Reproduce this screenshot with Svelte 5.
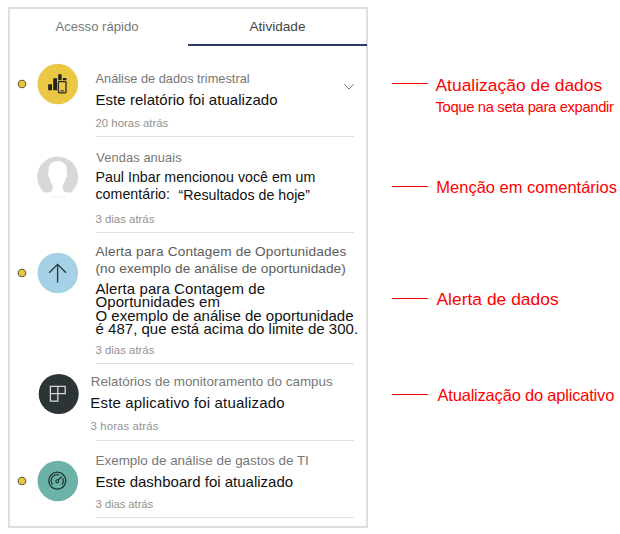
<script>
  const items = [
    {
      height: 91, pad: 25, icon: 'report', iconTop: 16.5, unread: true, expand: true,
      lines: [
        { kind: 'title small', text: 'Análise de dados trimestral', ls: -0.01 },
        { kind: 'message', text: 'Este relatório foi atualizado', ls: 0.04, gap: 7 },
        { kind: 'time', text: '20 horas atrás', ls: 0, gap: 10 }
      ]
    },
    {
      height: 96, pad: 13, icon: 'person', iconTop: 19,
      lines: [
        { kind: 'title small', text: 'Vendas anuais', ls: 0.12, indent: 0.8 },
        { kind: 'message compact', text: 'Paul Inbar mencionou você em um', ls: 0.02, gap: 5 },
        { kind: 'message compact', text: 'comentário:', quote: '“Resultados de hoje”', ls: 0.03, gap: 3 },
        { kind: 'time', text: '3 dias atrás', ls: 0, gap: 11 }
      ]
    },
    {
      height: 131, pad: 10, icon: 'alert', iconTop: 19, unread: true,
      lines: [
        { kind: 'title dark', text: 'Alerta para Contagem de Oportunidades', ls: 0.14 },
        { kind: 'title dark', text: '(no exemplo de análise de oportunidade)', ls: 0.06 },
        { kind: 'message', text: 'Alerta para Contagem de', ls: 0.09, gap: 5 },
        { kind: 'message', text: 'Oportunidades em', ls: 0.07 },
        { kind: 'message', text: 'O exemplo de análise de oportunidade', ls: 0.01, gap: 1 },
        { kind: 'message', text: 'é 487, que está acima do limite de 300.', ls: 0.02 },
        { kind: 'time', text: '3 dias atrás', ls: 0, gap: 8 }
      ]
    },
    {
      height: 77, pad: 9, icon: 'app', iconTop: 9,
      lines: [
        { kind: 'title', text: 'Relatórios de monitoramento do campus', ls: 0.02, indent: -4.7 },
        { kind: 'message', text: 'Este aplicativo foi atualizado', ls: 0.17, gap: 6, indent: -5.2 },
        { kind: 'time', text: '3 horas atrás', ls: 0.12, gap: 10, indent: -5 }
      ]
    },
    {
      height: 77, pad: 11, icon: 'gauge', iconTop: 19.3, unread: true,
      lines: [
        { kind: 'title', text: 'Exemplo de análise de gastos de TI', ls: 0.02 },
        { kind: 'message', text: 'Este dashboard foi atualizado', ls: 0, gap: 6 },
        { kind: 'time', text: '3 dias atrás', ls: -0.1, gap: 9 }
      ]
    }
  ];

  const notes = [
    { height: 102, rule: 7, indent: 0, size: 17.4, ls: 0.02, text: 'Atualização de dados', sub: 'Toque na seta para expandir' },
    { height: 112, rule: 8, indent: 0.8, size: 16.5, ls: 0, text: 'Menção em comentários' },
    { height: 96, rule: 8, indent: 1, size: 17.4, ls: 0.02, text: 'Alerta de dados' },
    { height: 30, rule: 8, indent: 2, size: 16.5, ls: -0.2, text: 'Atualização do aplicativo' }
  ];
</script>

<div class="page">
  <section class="card">
    <nav class="tabs">
      <div class="tab first">Acesso rápido</div>
      <div class="tab active">Atividade</div>
    </nav>
    {#each items as item}
      <article class="item" style:height="{item.height}px">
        <div class="status" style:padding-top="{item.iconTop + 16}px">
          {#if item.unread}
            <svg width="10" height="10" viewBox="0 0 10 10"><circle cx="5" cy="5" r="3.8" fill="#e9c53f" stroke="#65603f" stroke-width="1.1" /></svg>
          {/if}
        </div>
        <div class="icon" style:padding-top="{item.iconTop}px">
          <svg width="42" height="42" viewBox="0 0 42 42">
            {#if item.icon === 'report'}
              <circle cx="20.8" cy="21" r="20.3" fill="#eac845" />
              <path d="M11.2 21.2h3.8v6h-3.8zM16.2 15.3h3.8v11.9h-3.8zM21.2 11.3h3.4v6h-3.4zM25.8 15h3.6v2.3h-3.6z" fill="#25231c" />
              <rect x="21.4" y="18.6" width="7.6" height="11.2" rx=".8" fill="#eac845" stroke="#2b281c" stroke-width="1.3" />
              <path d="M23.2 27.9h4" stroke="#2b281c" stroke-width="1" />
            {:else if item.icon === 'person'}
              <circle cx="20.7" cy="21" r="20.5" fill="#d8d8d8" />
              <path d="M20.7 5.1c-5.7 0-9.3 3.6-9.1 8.4l.2 3.3c-1 .2-.9 1.700-.4 3.100.4 1.400.8 2 1.500 2 .3 3.100 1.200 5.400 2.600 7v4.600c-.3 2.400-3.600 3-8.400 3.200 3.600 3.300 8.400 4.300 13.600 4.300s10-1 13.600-4.300c-4.800-.2-8.100-.8-8.400-3.200v-4.600c1.400-1.600 2.300-3.900 2.600-7 .7 0 1.100-.6 1.500-2 .5-1.400.6-2.900-.4-3.100l.2-3.300c.2-4.800-3.400-8.400-9.100-8.400z" fill="#fff" />
            {:else if item.icon === 'alert'}
              <circle cx="20.8" cy="21" r="20.3" fill="#a6d0e6" />
              <path d="M20.6 30.5V12.3M12.2 20.7l8.4-8.4 8.4 8.4" fill="none" stroke="#24343a" stroke-width="1.3" />
            {:else if item.icon === 'app'}
              <circle cx="21.7" cy="21" r="20" fill="#2d3436" />
              <path d="M13.4 13.3h14.8v7.4h-7.4v7.5h-7.4zM20.8 13.3v7.4h-7.4" fill="none" stroke="#d5d9d9" stroke-width="1.3" />
            {:else}
              <circle cx="20.8" cy="21" r="20.3" fill="#6cb2a9" />
              <circle cx="20.3" cy="20.7" r="8.5" fill="none" stroke="#1f3330" stroke-width="1.3" />
              <path d="M15.7 24.6a6 6 0 0 1 6.5-9.6M25.7 18.2a6 6 0 0 1-.8 6.400" fill="none" stroke="#1f3330" stroke-width="1.2" />
              <circle cx="20.2" cy="21.2" r="1.4" fill="none" stroke="#1f3330" stroke-width="1.1" />
              <path d="M21.2 20.2l3.6-3.8" stroke="#1f3330" stroke-width="1.3" />
            {/if}
          </svg>
        </div>
        <div class="body" style:padding-top="{item.pad}px">
          {#each item.lines as line}
            <div
              class={line.kind}
              style:letter-spacing="{line.ls}px"
              style:margin-top="{line.gap ?? 0}px"
              style:margin-left="{line.indent ?? 0}px"
            >{line.text}{#if line.quote}<span class="quote">{line.quote}</span>{/if}</div>
          {/each}
          {#if item.expand}
            <svg class="chevron" width="12" height="8" viewBox="0 0 12 8"><path d="M1.3 1.3L6 6l4.7-4.7" fill="none" stroke="#777" stroke-width="1" /></svg>
          {/if}
        </div>
      </article>
    {/each}
  </section>

  <aside class="notes">
    {#each notes as note}
      <div class="note" style:height="{note.height}px">
        <div class="rule" style:margin-top="{note.rule}px"></div>
        <div style:padding-left="{note.indent}px">
          <div class="label" style:font-size="{note.size}px" style:letter-spacing="{note.ls}px">{note.text}</div>
          {#if note.sub}<div class="sub">{note.sub}</div>{/if}
        </div>
      </div>
    {/each}
  </aside>
</div>

<style>
  :global(body) { background: #fff; }
  .page {
    display: flex;
    align-items: flex-start;
    box-sizing: border-box;
    width: 620px;
    height: 534px;
    padding: 7px 0 0 8px;
    overflow: hidden;
    font-family: "Liberation Sans", Arial, sans-serif;
    white-space: nowrap;
  }
  .card {
    box-sizing: border-box;
    flex: none;
    width: 360px;
    height: 521px;
    border: 2px solid #dedede;
  }
  .tabs { display: flex; height: 37px; margin-right: -1px; }
  .tab {
    box-sizing: border-box;
    width: 179px;
    padding-top: 9px;
    font-size: 13.1px;
    line-height: 17px;
    text-align: center;
    color: #777;
  }
  .tab.first { width: 178px; padding-right: 4px; }
  .tab.active { color: #444; font-size: 13.6px; border-bottom: 2px solid #2c3b66; }
  .item { display: grid; grid-template-columns: 27px 58.5px 258.5px; }
  .status { padding-left: 6.7px; }
  svg { display: block; }
  .body {
    position: relative;
    box-sizing: border-box;
    border-bottom: 1px solid #dfdfdf;
  }
  .title { font-size: 13.4px; line-height: 17px; color: #777; }
  .title.small { font-size: 12.8px; line-height: 15px; }
  .title.dark { font-size: 13.65px; color: #5c5c5c; }
  .message { font-size: 15px; line-height: 13px; color: #111; }
  .message.compact { font-size: 14.2px; line-height: 14px; }
  .time { font-size: 11.4px; line-height: 14px; color: #929292; }
  .quote {
    margin-left: 8.5px;
    line-height: 0;
    vertical-align: -1px;
  }
  .chevron { position: absolute; top: 37px; right: -0.5px; }
  .notes { padding: 69px 0 0 23.5px; color: #ff0000; }
  .note { display: flex; align-items: flex-start; }
  .rule { width: 36.5px; height: 1px; margin-right: 7.5px; background: #ff0000; }
  .label { line-height: 18px; }
  .sub { margin-top: 5px; font-size: 14.8px; line-height: 17px; letter-spacing: -0.35px; }
</style>
